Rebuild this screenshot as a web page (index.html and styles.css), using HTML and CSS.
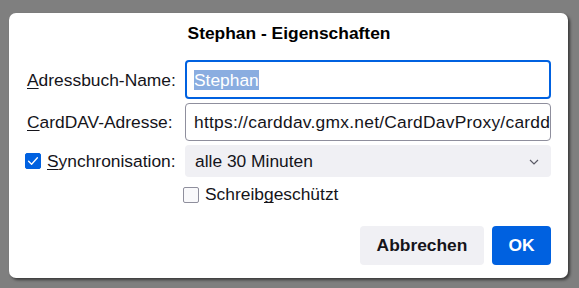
FILE: index.html
```html
<!DOCTYPE html>
<html lang="de">
<head>
<meta charset="utf-8">
<title>Stephan - Eigenschaften</title>
<link rel="stylesheet" href="styles.css">
</head>
<body>
<div class="dialog">
  <div class="title">Stephan - Eigenschaften</div>
  <div class="form">
    <label class="label"><u>A</u>dressbuch-Name:</label>
    <div class="field focused"><span class="sel">Stephan</span></div>
    <label class="label"><u>C</u>ardDAV-Adresse:</label>
    <div class="field"><span class="url">https://carddav.gmx.net/CardDavProxy/carddav</span></div>
    <label class="label check-label">
      <span class="cb checked"><svg width="16" height="16" viewBox="0 0 16 16"><path d="M3.6 8.2 L6.6 11.2 L12.4 4.8" fill="none" stroke="#fff" stroke-width="1.3" stroke-linecap="round" stroke-linejoin="round"/></svg></span>
      <span><u>S</u>ynchronisation:</span>
    </label>
    <div class="select"><span>alle 30 Minuten</span><svg class="chev" width="10" height="6" viewBox="0 0 10 6"><path d="M1 1 L5 5 L9 1" fill="none" stroke="#5b5b66" stroke-width="1.2"/></svg></div>
    <div></div>
    <label class="ro"><span class="cb"></span><span>Schreib<u>g</u>eschützt</span></label>
  </div>
  <div class="buttons">
    <button class="btn">Abbrechen</button>
    <button class="btn primary">OK</button>
  </div>
</div>
</body>
</html>
```
FILE: styles.css
```css
html, body {
  margin: 0;
  height: 100%;
}
body {
  background: #7f7f7f;
  font-family: "Liberation Sans", Arial, sans-serif;
  font-size: 17.4px;
  color: #15141a;
  padding: 13px 0 0 9px;
  box-sizing: border-box;
}
.dialog {
  width: 559px;
  height: 265px;
  box-sizing: border-box;
  background: #fff;
  border-radius: 7px;
  box-shadow: 2px 2px 3px rgba(0, 0, 0, 0.55);
  padding: 10px 17px 0 18px;
  display: flex;
  flex-direction: column;
}
.title {
  font-weight: bold;
  text-align: center;
  line-height: 20px;
  height: 20px;
  color: #000;
}
.form {
  margin-top: 17px;
  display: grid;
  grid-template-columns: 150px 1fr;
  column-gap: 8px;
  grid-template-rows: 39px 38px 32px 27px;
  row-gap: 4px;
  align-items: center;
}
.label {
  white-space: nowrap;
  line-height: 20px;
}
u {
  text-underline-offset: 2px;
  text-decoration-skip-ink: none;
}
.field {
  height: 100%;
  box-sizing: border-box;
  border: 1px solid #8f8f9d;
  border-radius: 4px;
  padding: 0 8px;
  display: flex;
  align-items: center;
  white-space: nowrap;
  overflow: hidden;
  color: #15141a;
}
.url { letter-spacing: 0.25px; }
.field.focused {
  border: 2px solid #0061e0;
  padding-left: 7px;
}
.sel {
  background: #8aade0;
  color: #fff;
  line-height: 20px;
}
.check-label {
  display: flex;
  align-items: center;
  gap: 6px;
  margin-left: -2px;
}
.cb {
  width: 16px;
  height: 16px;
  box-sizing: border-box;
  border: 1px solid #8f8f9d;
  border-radius: 2px;
  background: #f9f9fb;
  display: inline-block;
  flex: none;
}
.cb svg { display: block; }
.cb.checked {
  background: #0061e0;
  border-color: #0061e0;
}
.cb.checked svg { margin: -1px; }
.select {
  height: 32px;
  box-sizing: border-box;
  background: #f0f0f4;
  border-radius: 4px;
  padding: 0 12px 0 10px;
  display: flex;
  align-items: center;
  justify-content: space-between;
}
.chev { display: block; margin-top: 1px; }
.ro {
  display: flex;
  align-items: center;
  gap: 6px;
  margin-left: -2px;
  align-self: center;
}
.buttons {
  margin-top: auto;
  margin-bottom: 13px;
  display: flex;
  justify-content: flex-end;
  gap: 8px;
}
.btn {
  font: inherit;
  font-weight: bold;
  height: 39px;
  border: none;
  border-radius: 4px;
  background: #f0f0f4;
  color: #15141a;
  width: 124px;
  padding: 0;
}
.btn.primary {
  width: 59px;
  background: #0061e0;
  color: #fff;
}
```
